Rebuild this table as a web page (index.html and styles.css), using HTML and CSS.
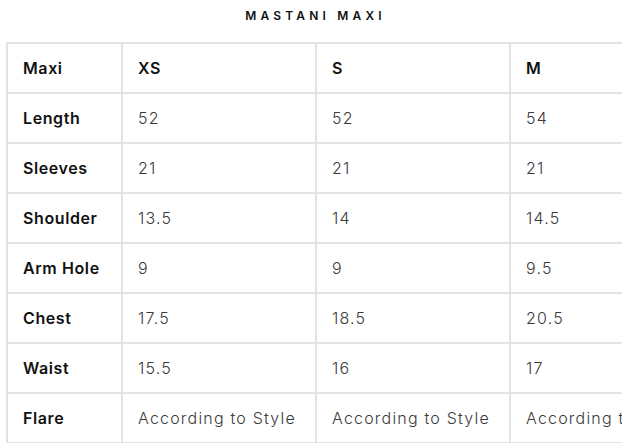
FILE: index.html
```html
<!DOCTYPE html>
<html lang="en">
<head>
<meta charset="utf-8">
<title>Mastani Maxi</title>
<link rel="stylesheet" href="styles.css">
</head>
<body>
<div class="chart">
  <h2 class="chart-title">MASTANI MAXI</h2>
  <div class="table-wrap">
    <table class="size-table">
      <colgroup>
        <col class="c-label">
        <col class="c-size">
        <col class="c-size">
        <col class="c-size">
      </colgroup>
      <tbody>
        <tr><th>Maxi</th><th>XS</th><th>S</th><th>M</th></tr>
        <tr><th>Length</th><td>52</td><td>52</td><td>54</td></tr>
        <tr><th>Sleeves</th><td>21</td><td>21</td><td>21</td></tr>
        <tr><th>Shoulder</th><td>13.5</td><td>14</td><td>14.5</td></tr>
        <tr><th>Arm Hole</th><td>9</td><td>9</td><td>9.5</td></tr>
        <tr><th>Chest</th><td>17.5</td><td>18.5</td><td>20.5</td></tr>
        <tr><th>Waist</th><td>15.5</td><td>16</td><td>17</td></tr>
        <tr><th>Flare</th><td>According to Style</td><td>According to Style</td><td>According to Style</td></tr>
      </tbody>
    </table>
  </div>
</div>
</body>
</html>
```

FILE: styles.css
```css
html, body {
  margin: 0;
  padding: 0;
  background: #ffffff;
}

body {
  font-family: Inter, "Open Sans", "Liberation Sans", sans-serif;
  color: #333333;
  overflow: hidden;
}

.chart {
  margin: 0 18px 0 5px;
}

.chart-title {
  margin: 0;
  padding: 9px 0 0 4px;
  height: 41px;
  box-sizing: border-box;
  text-align: center;
  font-size: 12px;
  line-height: 14px;
  font-weight: 600;
  letter-spacing: 4.2px;
  color: #111111;
}

.table-wrap {
  overflow: hidden;
  padding: 1px 0 0 1px;
}

.size-table {
  border-collapse: collapse;
  table-layout: fixed;
  width: 696px;
}

.c-label { width: 115px; }
.c-size { width: 194px; }

.size-table th,
.size-table td {
  border: 2px solid #e3e3e3;
  height: 48px;
  padding: 0 0 0 15px;
  text-align: left;
  vertical-align: middle;
  font-size: 16px;
  white-space: nowrap;
}

.size-table th {
  font-weight: 600;
  letter-spacing: 0.6px;
  color: #111111;
}

.size-table td {
  font-weight: 300;
  letter-spacing: 1.2px;
  color: #3a3a3a;
}
```
